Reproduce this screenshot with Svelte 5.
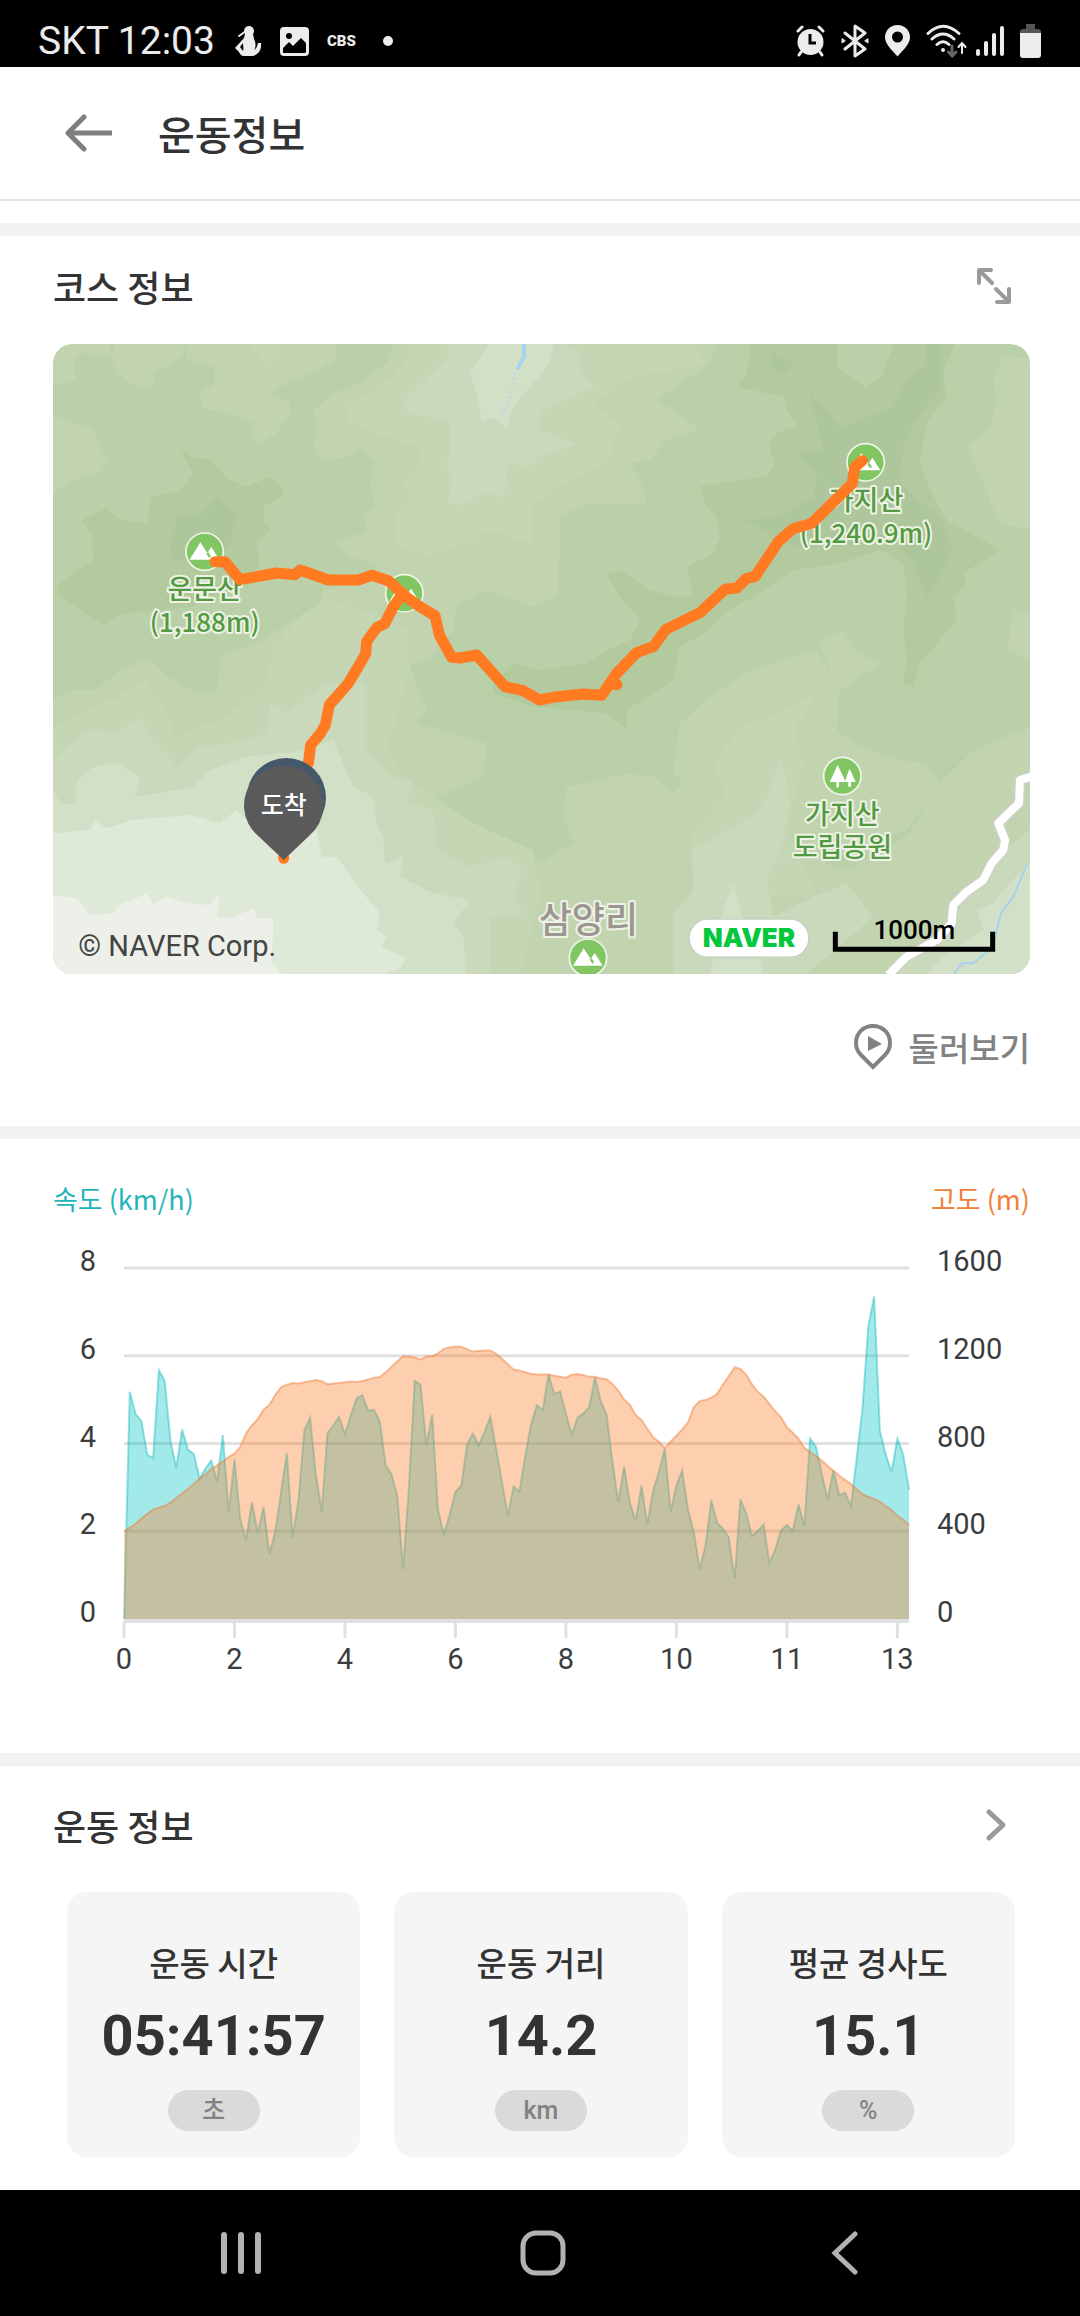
<script>
  // one sample per 100 m or so, km/h
  const speed = [
    0, 5.18, 4.67, 4.51, 3.74, 3.67, 5.67, 5.43, 4.06, 3.45, 4.32, 3.86, 3.76, 3.2, 3.43, 3.61, 3.14,
    4.19, 2.43, 3.64, 2.26, 1.81, 2.66, 1.97, 2.55, 1.49, 1.98, 2.88, 3.78, 1.86, 2.69, 4.29, 4.59,
    3.28, 2.45, 4.24, 4.41, 4.61, 4.21, 4.65, 5.03, 5.1, 4.75, 4.77, 4.49, 3.5, 3.3, 2.81, 1.14, 3,
    5.43, 5.34, 3.96, 4.66, 2.49, 1.93, 2.37, 2.9, 3.04, 3.98, 4.23, 3.96, 4.26, 4.61, 3.89, 3.12,
    2.36, 3.02, 2.91, 3.71, 4.43, 4.87, 4.76, 5.57, 5.13, 5.19, 4.69, 4.2, 4.59, 4.69, 4.83, 5.51,
    4.96, 4.66, 3.59, 2.67, 3.48, 2.65, 2.24, 3.04, 2.16, 2.92, 3.37, 3.88, 2.45, 3.04, 3.39, 2.49,
    1.98, 1.14, 1.67, 2.71, 2.19, 2.06, 1.87, 0.92, 2.73, 2.41, 1.89, 2.01, 2.16, 1.28, 1.59, 2.02,
    2.14, 2.01, 2.61, 2.12, 4.11, 3.92, 3.31, 2.73, 3.39, 2.82, 2.88, 2.57, 3.67, 4.8, 6.68, 7.35,
    4.29, 3.75, 3.35, 4.11, 3.75, 2.95,
  ];
  // metres, same sampling as speed
  const altitude = [
    398, 417, 434, 458, 478, 500, 508, 516, 530, 552, 573, 593, 615, 640, 660, 682, 700, 718, 739,
    754, 784, 847, 882, 911, 954, 977, 1021, 1056, 1068, 1076, 1074, 1079, 1084, 1089, 1084, 1070,
    1074, 1076, 1079, 1082, 1081, 1085, 1092, 1100, 1103, 1125, 1150, 1175, 1198, 1197, 1192, 1183,
    1198, 1198, 1211, 1231, 1238, 1242, 1241, 1230, 1219, 1222, 1224, 1224, 1209, 1186, 1161, 1137,
    1133, 1125, 1118, 1114, 1115, 1115, 1109, 1104, 1100, 1114, 1117, 1112, 1104, 1104, 1096, 1093,
    1071, 1040, 1001, 976, 930, 907, 867, 828, 808, 780, 808, 836, 864, 896, 966, 993, 998, 1009,
    1027, 1068, 1106, 1148, 1140, 1114, 1070, 1035, 1013, 980, 947, 919, 874, 849, 822, 781, 761,
    742, 723, 698, 676, 654, 634, 615, 591, 569, 557, 547, 535, 515, 496, 471, 452, 428,
  ];

  const plot = { left: 71, right: 856, top: 38, bottom: 389 };
  const rows = [0, 1, 2, 3, 4].map((n) => ({
    y: plot.bottom - (n * (plot.bottom - plot.top)) / 4,
    speed: n * 2,
    altitude: n * 400,
  }));
  const ticks = [0, 2, 4, 6, 8, 10, 11, 13].map((label, i) => ({ label, x: px(i * 19) }));

  function px(i) {
    return plot.left + (i * (plot.right - plot.left)) / (speed.length - 1);
  }

  function line(values, max) {
    return values
      .map((v, i) => {
        const y = plot.bottom - (v / max) * (plot.bottom - plot.top);
        return `${px(i).toFixed(1)},${y.toFixed(1)}`;
      })
      .join(" ");
  }

  function area(points) {
    return `${plot.left},${plot.bottom} ${points} ${plot.right},${plot.bottom}`;
  }

  const speedLine = line(speed, 8);
  const altitudeLine = line(altitude, 1600);

  // map shading, painted in order
  const terrain = [
    ["l1", "39,42 210,42 215,75 180,80 140,65 100,90 108,150 70,160 39,160"],
    ["l1", "220,42 435,42 430,75 400,100 340,130 345,170 300,180 260,150 235,130 215,90"],
    ["l1", "440,42 890,42 890,85 830,125 750,155 690,190 750,220 750,250 710,310 655,340 635,310 640,280 560,250 490,235 480,190 525,160 525,110 440,90"],
    ["l2", "640,42 725,42 720,80 680,122 665,80 635,60"],
    ["l1", "39,255 160,300 180,350 205,400 180,425 100,450 39,490"],
    ["l1", "1060,42 1040,100 960,160 880,190 820,240 830,300 820,340 850,390 920,380 965,350 1000,400 990,480 1005,520 970,560 980,600 890,640 930,680 1000,700 1040,740 850,780 830,840 760,870 650,940 545,970 530,1090 450,1080 370,1030 330,985 240,1020 170,1080 100,1080 39,1110 39,1932 2970,1932 2970,1190 2800,1260 2700,1360 2600,1520 2420,1620 2350,1600 2600,1500 2700,1360 2660,1300 2570,1290 2460,1250 2390,1200 2400,1080 2330,960 2130,1020 2010,1100 1920,1180 1900,1330 1930,1360 1900,1390 1840,1340 1760,1330 1640,1360 1580,1370 1570,1460 1600,1540 1500,1600 1240,1440 1190,1400 1330,1340 1340,1240 1130,1180 1160,1140 1110,1010 1180,980 1240,900 1250,830 1340,780 1480,830 1555,800 1560,560 1640,520 1820,520 1800,450 1770,400 1830,390 1880,330 1980,300 1900,240 1850,210 2010,100 2030,42"],
    ["l2", "1130,42 1060,140 920,230 920,270 1000,310 1130,350 1140,400 1090,460 1110,510 1060,560 1070,640 1160,680 1280,640 1350,600 1480,640 1480,520 1560,470 1700,400 1740,280 1660,230 1750,150 2000,100 1960,42"],
    ["l2", "39,1200 150,1130 220,1110 320,1050 385,1160 400,1220 560,1160 680,1060 700,960 790,850 860,810 1000,850 1100,900 1110,1010 1060,1200 1040,1260 1100,1350 1300,1480 1480,1560 1500,1700 1440,1932 39,1932"],
    ["l2", "2100,1190 2220,1150 2330,1090 2260,1200 2290,1300 2240,1500 2300,1620 2330,1700 1960,1700 1950,1520 2060,1390 2020,1300"],
    ["l3", "1225,42 1220,90 1090,210 1100,250 1230,270 1230,370 1220,400 1235,450 1225,520 1260,525 1330,490 1390,500 1405,400 1470,410 1500,380 1610,340 1500,300 1500,250 1560,215 1600,200 1660,170 1620,120 1620,60 1560,42"],
    ["l3", "39,1290 120,1220 160,1195 220,1210 300,1160 330,1220 410,1310 480,1250 580,1240 680,1210 690,1120 740,1150 860,1060 975,1060 975,1260 1050,1340 1115,1350 1100,1420 1180,1440 1190,1560 1290,1610 1400,1580 1450,1620 1420,1700 1450,1760 1350,1760 1350,1932 39,1932"],
    ["l3", "2225,1290 2250,1420 2220,1560 2180,1640 2200,1760 2320,1700 2420,1660 2500,1760 2300,1932 1900,1932 1900,1750 1960,1680 1960,1560 2150,1450 2180,1400"],
    ["l3", "2970,1500 2860,1590 2740,1760 2560,1932 2970,1932"],
    ["l4", "1345,42 1290,130 1310,190 1325,275 1360,265 1400,290 1420,230 1530,100 1540,42"],
    ["l4", "39,1380 60,1420 105,1425 110,1350 160,1310 230,1300 300,1340 285,1400 350,1390 460,1370 510,1320 620,1280 770,1265 880,1230 920,1330 940,1370 1000,1400 1010,1480 1030,1520 1035,1600 1090,1580 1080,1640 1180,1690 1290,1710 1240,1780 1270,1820 1280,1932 39,1932"],
    ["l4", "2080,1660 2100,1740 2160,1880 2170,1932 2010,1932 2050,1740"],
    ["l4", "2970,1590 2860,1720 2810,1740 2830,1800 2720,1870 2660,1932 2970,1932"],
    ["l5", "39,1510 150,1500 165,1470 200,1495 280,1470 450,1455 540,1480 590,1440 620,1470 830,1500 845,1580 890,1580 970,1690 1020,1750 1010,1800 1040,1820 1025,1850 1100,1885 1080,1915 1035,1932 39,1932"],
    ["l6", "39,1695 110,1705 150,1755 220,1750 240,1725 320,1690 340,1725 375,1700 440,1720 510,1725 540,1690 530,1760 570,1765 640,1735 650,1765 700,1765 695,1900 725,1932 39,1932"],
    ["d1", "420,360 460,380 510,390 560,445 620,470 690,440 730,480 725,500 670,530 670,570 690,600 650,640 660,690 640,760 450,830 250,850 190,885 60,800 50,770 110,720 160,690 155,610 125,570 200,535 240,570 320,580 335,500 420,480 460,430"],
    ["d2", "530,500 590,560 570,640 520,700 400,690 390,650 410,560 480,555"],
    ["d1", "2130,42 2130,80 2120,130 2090,170 2180,190 2230,200 2240,240 2275,285 2210,310 2185,345 2205,400 2180,440 2000,465 1980,470 2000,530 2030,560 2040,620 2020,670 1940,710 1960,800 1900,800 1830,780 1740,720 1700,735 1740,800 1800,870 1770,930 1700,960 1640,1000 1500,1020 1420,1000 1360,1060 1360,1090 1480,1130 1700,1150 1760,1195 1760,1140 1900,1050 1920,950 2010,900 2050,850 2140,800 2260,720 2400,700 2520,660 2590,700 2600,800 2590,900 2600,990 2590,1060 2620,1070 2640,1000 2750,870 2740,800 2780,760 2770,730 2880,660 2720,570 2670,480 2640,400 2660,280 2720,200 2710,120 2745,42"],
    ["d2", "2310,185 2360,240 2400,290 2490,260 2560,230 2600,150 2660,100 2660,42 2700,42 2700,180 2620,280 2590,350 2580,450 2620,500 2700,560 2740,660 2660,810 2620,700 2560,630 2400,650 2260,650 2115,570 2220,560 2320,500 2330,430 2270,370 2350,360"],
    ["d2", "2195,70 2225,85 2260,100 2240,130 2195,120"],
    ["l0", "2390,42 2560,42 2525,140 2475,170 2430,140 2390,110"],
    ["l1", "2890,80 2970,85 2970,600 2880,580 2820,440 2780,350 2850,290 2870,210 2860,140"],
    ["l1", "2920,840 2970,850 2970,990 2900,960"],
    ["l1", "2330,940 2410,900 2440,960 2520,1000 2400,1080"],
  ];

  const road =
    "M2980 1338L2940 1350L2937 1420L2905 1450L2875 1480L2895 1530L2890 1560L2855 1600L2830 1650L2780 1685L2740 1725L2735 1780L2690 1830L2600 1880L2545 1935";

  const peaks = [
    [494, 665],
    [1093, 790],
    [2477, 397],
    [1644, 1883],
  ];

  const stats = [
    { name: "운동 시간", value: "05:41:57", unit: "초" },
    { name: "운동 거리", value: "14.2", unit: "km" },
    { name: "평균 경사도", value: "15.1", unit: "%" },
  ];
</script>

<div class="screen">
  <div class="status">
    <span class="carrier">SKT 12:03</span>
    <svg class="figure" width="27" height="32" viewBox="0 0 27 32" fill="#ececec">
      <circle cx="14" cy="6" r="5" />
      <path d="M10 9h8l1 5c2 4 2 8 0 11 3-2 3-4 4-7h3c1 8-4 12-8 13H9c-3 0-4-2-5-4l-4-4 9-10z" />
      <path d="M8 18l-3 4 3 4c1-2 0-5 0-8z" fill="#000" />
      <path d="M4 11l7-5" stroke="#ececec" stroke-width="2" stroke-linecap="round" />
    </svg>
    <svg width="29" height="32" viewBox="0 0 29 32">
      <rect y="2" width="29" height="29" rx="4" fill="#ececec" />
      <circle cx="9" cy="11" r="3" fill="#000" />
      <path d="M3 28v-5l6-6 4 4 8-8 5 5v9l-1 1z" fill="#000" />
    </svg>
    <span class="cbs">CBS</span>
    <span class="dot"></span>

    <div class="indicators">
      <svg width="29" height="34" viewBox="0 0 29 34" fill="none" stroke="#ececec" stroke-width="3" stroke-linecap="round">
        <circle cx="14.500" cy="18" r="13" fill="#ececec" stroke="none" />
        <path d="M2 7l4-4M27 7l-4-4M5 28l-2 3M24 28l2 3" />
        <path d="M14 10v9h6" stroke="#000" stroke-linecap="butt" />
      </svg>
      <svg width="28" height="34" viewBox="0 0 28 34" fill="none" stroke="#ececec" stroke-width="3" stroke-linejoin="round" stroke-linecap="round">
        <path d="M4 9l20 16-10 7V2l10 7L4 25" />
        <path d="M1 15v4l3-2zM27 15v4l-3-2z" stroke-width="1" fill="#ececec" />
      </svg>
      <svg width="25" height="34" viewBox="0 0 25 34">
        <path d="M12.500 1C5.500 1 0 6.500 0 13c0 7 6 12 12.500 19.500C19 25 25 20 25 13 25 6.500 19.500 1 12.500 1z" fill="#ececec" />
        <circle cx="12.500" cy="13" r="5.500" fill="#000" />
      </svg>
      <svg class="wifi" width="41" height="34" viewBox="0 0 41 34" fill="none" stroke="#ececec" stroke-width="3" stroke-linecap="round">
        <path d="M2 9.500Q17-5 33 9.500M6 15Q17 5 28 15M11 20.500Q17 15 23 20.500" />
        <circle cx="17" cy="26" r="2" fill="#ececec" stroke="none" />
        <path d="M26 22v9M22.500 28l3.700 4 3.700-4" stroke="#666" />
        <path d="M36 29V19M32.500 23l3.500-4 3.500 4" stroke-width="2" />
      </svg>
      <svg width="28" height="34" viewBox="0 0 28 34" stroke="#ececec" stroke-width="4" stroke-linecap="round">
        <path d="M2 27v3M10 19v11M18 11v19M26 4v26" />
      </svg>
      <svg width="21" height="34" viewBox="0 0 21 34">
        <path d="M6 0h9v5h3q3 0 3 3v2H0V8q0-3 3-3h3z" fill="#555" />
        <path d="M0 9h21v22q0 3-3 3H3q-3 0-3-3z" fill="#ececec" />
      </svg>
    </div>
  </div>

  <header>
    <button class="back" aria-label="뒤로">
      <svg width="48" height="40" viewBox="0 0 48 40" fill="none" stroke="#7e7e7e" stroke-width="5">
        <path d="M47 20H4" />
        <path d="M19 4L3 20l16 16" stroke-linecap="round" stroke-linejoin="round" />
      </svg>
    </button>
    <h1>운동정보</h1>
  </header>

  <main>
    <section class="course">
      <div class="head">
        <h2>코스 정보</h2>
        <button class="expand" aria-label="지도 확대">
          <svg width="36" height="38" viewBox="0 0 36 38" fill="none" stroke="#9a9a9a" stroke-width="4" stroke-linecap="round" stroke-linejoin="round">
            <path d="M15 3H3v13M4 4l12 12M33 22v13H21M32 34L20 22" />
          </svg>
        </button>
      </div>

      <svg class="map" viewBox="39 42 2931 1890">
        <rect class="l0" x="39" y="42" width="2931" height="1890" />
        {#each terrain as [tone, points]}
          <polygon class={tone} {points} />
        {/each}

        <g class="stream">
          <path d="M1452 42V80L1432 118" stroke-width="11" />
          <path d="M1425 130L1410 200L1383 265" stroke-width="4" stroke-dasharray="6 8" />
          <path d="M2962 1600L2945 1640L2920 1700L2885 1745L2870 1800L2860 1850L2800 1900H2765L2742 1932" stroke-width="6" />
        </g>
        <path class="road-edge" d={road} />
        <path class="road" d={road} />

        {#each peaks as [x, y]}
          <g transform="translate({x} {y})">
            <circle class="poi" r="56" />
            <path d="M-45 24L-13 -28L8 4L20 -14L44 24Z" fill="#fff" />
            <path d="M8 4L16 16" stroke="#82c663" stroke-width="7" />
          </g>
        {/each}
        <g transform="translate(2407 1338)">
          <circle class="poi" r="56" />
          <path d="M-14 -34L10 18H-10V34H-18V18H-38ZM22 -22L40 18H26V32H18V18H8L14 -2Z" fill="#fff" />
        </g>

        <g class="place">
          <text y="807"><tspan x="494">운문산</tspan><tspan class="height" x="494" dy="98">(1,188m)</tspan></text>
          <text y="540"><tspan x="2478">가지산</tspan><tspan class="height" x="2478" dy="98">(1,240.9m)</tspan></text>
          <text y="1482"><tspan x="2407">가지산</tspan><tspan x="2407" dy="98">도립공원</tspan></text>
          <text class="village" x="1645" y="1810">삼양리</text>
        </g>

        <g class="route">
          <path d="M525 695H555L600 749L710 729L765 734L780 720L865 750H955L995 736L1045 752L1100 802L1140 830L1185 857L1198 915L1235 982L1260 984L1310 975L1395 1070L1450 1082L1498 1110L1540 1102L1630 1092L1685 1096L1730 1030L1790 968L1840 950L1878 898L1980 848L2055 778L2090 774L2120 745L2145 740L2215 635L2258 597L2315 580L2437 460L2444 412L2467 392" />
          <path d="M1085 795L1060 830L1035 880L1010 893L980 935L977 972L925 1060L868 1125L856 1185L840 1212L812 1245L805 1300" />
          <path d="M1715 1062L1731 1064M731 1585V1583" />
        </g>

        <circle cx="739" cy="1403" r="119" fill="#46596b" />
        <path d="M731 1590L655 1518A119 119 0 1 1 807 1518Z" fill="#5a5a5a" />
        <text class="goal" x="731" y="1452">도착</text>

        <text class="copyright" x="115" y="1878">© NAVER Corp.</text>
        <rect class="badge" x="1947" y="1767" width="360" height="115" rx="57" />
        <text class="naver" x="2127" y="1852">NAVER</text>
        <path d="M2386 1805V1858H2858V1805" fill="none" stroke="#000" stroke-width="15" />
        <text class="scale" x="2623" y="1828">1000m</text>
      </svg>

      <button class="tour">
        <svg width="40" height="48" viewBox="0 0 40 48">
          <path d="M20 3C10 3 3 10.500 3 20c0 5 2 9 5 12l12 12 12-12c3-3 5-7 5-12C37 10.500 30 3 20 3z" fill="none" stroke="#828282" stroke-width="4" />
          <path d="M15 13l14 8-14 7z" fill="#828282" />
        </svg>
        둘러보기
      </button>
    </section>

    <section class="graph">
      <div class="legend">
        <span class="speed">속도 (km/h)</span>
        <span class="altitude">고도 (m)</span>
      </div>
      <svg class="chart" viewBox="0 0 977 450">
        {#each rows as row}
          {#if row.speed > 0}
            <line x1={plot.left} x2={plot.right} y1={row.y} y2={row.y} stroke="#e0e0e0" stroke-width="3" />
          {/if}
          <text class="level" x="43" y={row.y + 3} text-anchor="end">{row.speed}</text>
          <text class="level" x="884" y={row.y + 3}>{row.altitude}</text>
        {/each}
        <polygon points={area(speedLine)} fill="#04c4c4" fill-opacity="0.37" />
        <polyline points={speedLine} fill="none" stroke="#04b4bc" stroke-opacity="0.4" stroke-width="2" />
        <polygon points={area(altitudeLine)} fill="#fc7d27" fill-opacity="0.37" />
        <polyline points={altitudeLine} fill="none" stroke="#f07830" stroke-opacity="0.45" stroke-width="2" />
        <line x1={plot.left} x2={plot.right} y1="391" y2="391" stroke="#e0e0e0" stroke-width="4" />
        {#each ticks as tick}
          <line x1={tick.x} x2={tick.x} y1="391" y2="408" stroke="#e0e0e0" stroke-width="3" />
          <text class="km" x={tick.x} y="439">{tick.label}</text>
        {/each}
      </svg>
    </section>

    <section class="workout">
      <div class="head">
        <h2>운동 정보</h2>
        <button class="more" aria-label="운동 정보 더보기">
          <svg width="20" height="32" viewBox="0 0 20 32" fill="none" stroke="#9a9a9a" stroke-width="5" stroke-linecap="round" stroke-linejoin="round">
            <path d="M3 3l14 13L3 29" />
          </svg>
        </button>
      </div>
      <div class="cards">
        {#each stats as stat}
          <div class="card">
            <h3>{stat.name}</h3>
            <strong>{stat.value}</strong>
            <span class="unit">{stat.unit}</span>
          </div>
        {/each}
      </div>
    </section>
  </main>

  <nav>
    <button aria-label="최근 앱">
      <svg width="44" height="44" viewBox="0 0 44 44" stroke="#b2b2b2" stroke-width="6" stroke-linecap="round">
        <path d="M5 4v36M22 4v36M39 4v36" />
      </svg>
    </button>
    <button aria-label="홈">
      <svg width="46" height="46" viewBox="0 0 46 46" fill="none" stroke="#b2b2b2" stroke-width="5">
        <rect x="3" y="3" width="40" height="40" rx="13" />
      </svg>
    </button>
    <button aria-label="이전">
      <svg width="44" height="44" viewBox="0 0 44 44" fill="none" stroke="#b2b2b2" stroke-width="5" stroke-linecap="round">
        <path d="M32 3L12 22l20 19" />
      </svg>
    </button>
  </nav>
</div>

<style>
  :global(body) {
    background: #fff;
    color: #333;
    font-family: Roboto, "Noto Sans CJK KR", sans-serif;
  }

  .screen {
    display: flex;
    flex-direction: column;
    min-height: 100vh;
  }

  svg {
    display: block;
    flex: none;
  }

  button {
    display: flex;
    align-items: center;
    justify-content: center;
    padding: 0;
    border: none;
    background: none;
    font: inherit;
    color: inherit;
    cursor: pointer;
  }

  h1,
  h2,
  h3 {
    margin: 0;
    font-family: "Noto Sans CJK KR", sans-serif;
    font-weight: 500;
  }

  .status {
    display: flex;
    align-items: center;
    height: 67px;
    padding: 14px 39px 0 38px;
    box-sizing: border-box;
    background: #000;
    color: #ececec;
  }

  .carrier {
    font-size: 39px;
    line-height: 48px;
  }

  .figure {
    margin: 0 18px 0 20px;
  }

  .cbs {
    margin: 0 27px 0 18px;
    font-size: 15px;
    font-weight: 900;
  }

  .dot {
    width: 10px;
    height: 10px;
    border-radius: 50%;
    background: #ececec;
  }

  .indicators {
    display: flex;
    gap: 16px;
    margin-left: auto;
  }

  .wifi {
    margin-right: -7px;
  }

  header {
    display: flex;
    align-items: center;
    gap: 45px;
    height: 132px;
    padding: 0 65px;
    margin-bottom: 22px;
    border-bottom: 2px solid #e2e2e2;
  }

  h1 {
    font-size: 40px;
  }

  main {
    flex: 1;
  }

  section {
    padding: 0 50px 0 53px;
    border-top: 13px solid #f1f2f4;
  }

  .head {
    display: flex;
    align-items: center;
    justify-content: space-between;
    height: 100px;
    margin-bottom: 8px;
  }

  h2 {
    font-size: 36px;
  }

  .expand {
    margin-right: 18px;
  }

  .map {
    width: 100%;
    height: auto;
    border-radius: 20px;
  }

  .l0 { fill: #bad0a8; }
  .l1 { fill: #c1d4af; }
  .l2 { fill: #c4d6b4; }
  .l3 { fill: #cad9bb; }
  .l4 { fill: #d3e0c8; }
  .l5 { fill: #dfe9d8; }
  .l6 { fill: #edf0e9; }
  .d1 { fill: #b3ca9f; }
  .d2 { fill: #aec69b; }

  .stream {
    fill: none;
    stroke: #a5d3ee;
  }

  .road,
  .road-edge {
    fill: none;
    stroke: #fff;
    stroke-width: 24;
    stroke-linejoin: round;
  }

  .road-edge {
    stroke: #cfd0c8;
    stroke-width: 32;
  }

  .poi {
    fill: #82c663;
    stroke: #f0f6ea;
    stroke-width: 5;
  }

  .place {
    font-family: "Noto Sans CJK KR", sans-serif;
    font-size: 81px;
    font-weight: 500;
    text-anchor: middle;
    fill: #549a42;
    stroke: #eef3e6;
    stroke-width: 12;
    stroke-linejoin: round;
    paint-order: stroke;
  }

  .height {
    font-size: 78px;
  }

  .village {
    font-size: 108px;
    fill: #9b9691;
  }

  .route {
    fill: none;
    stroke: #ff7a21;
    stroke-width: 33;
    stroke-linecap: round;
    stroke-linejoin: round;
  }

  .goal {
    font-family: "Noto Sans CJK KR", sans-serif;
    font-size: 75px;
    font-weight: 500;
    text-anchor: middle;
    fill: #fff;
  }

  .copyright {
    font-size: 87px;
    fill: #444;
  }

  .badge {
    fill: #fff;
    stroke: #c9d0c0;
    stroke-width: 5;
  }

  .naver {
    font-family: Inter, sans-serif;
    font-size: 78px;
    font-weight: 900;
    text-anchor: middle;
    fill: #03c73c;
  }

  .scale {
    font-size: 78px;
    font-weight: 500;
    text-anchor: middle;
  }

  .tour {
    gap: 16px;
    margin: 49px 0 55px auto;
    font-family: "Noto Sans CJK KR", sans-serif;
    font-size: 33px;
    font-weight: 500;
    line-height: 48px;
    color: #828282;
  }

  .graph {
    padding-bottom: 73px;
  }

  .legend {
    display: flex;
    justify-content: space-between;
    padding: 40px 0 11px;
    font-family: "Noto Sans CJK KR", sans-serif;
    font-size: 27px;
    line-height: 40px;
  }

  .speed {
    color: #1fb5bb;
  }

  .altitude {
    color: #f08038;
  }

  .chart {
    width: 100%;
    height: auto;
  }

  .level,
  .km {
    font-size: 29px;
    fill: #3a3d40;
  }

  .km {
    text-anchor: middle;
  }

  .workout .head {
    height: 118px;
  }

  .more {
    margin-right: 24px;
  }

  .cards {
    display: grid;
    grid-template-columns: repeat(3, 1fr);
    gap: 34px;
    margin: 0 15px 33px 14px;
  }

  .card {
    display: flex;
    flex-direction: column;
    align-items: center;
    padding: 50px 0 26px;
    border-radius: 20px;
    background: #f5f5f5;
  }

  h3 {
    font-size: 33px;
    line-height: 40px;
  }

  strong {
    margin: 26px 0;
    font-size: 56px;
    line-height: 56px;
  }

  .unit {
    width: 92px;
    border-radius: 21px;
    background: #dadada;
    color: #828282;
    font-size: 25px;
    font-weight: 500;
    line-height: 41px;
    text-align: center;
  }

  nav {
    display: flex;
    justify-content: space-around;
    align-items: center;
    height: 126px;
    padding: 0 84px 0 90px;
    background: #000;
  }

  nav button {
    width: 120px;
    height: 120px;
  }
</style>
